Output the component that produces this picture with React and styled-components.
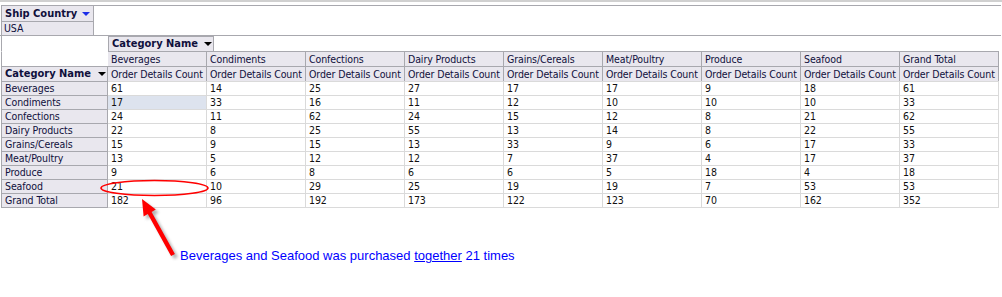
import React from 'react'
import { styled, createGlobalStyle } from 'styled-components'

const GlobalStyle = createGlobalStyle`
  body {
    margin: 0;
    background: #ffffff;
    font-family: "DejaVu Sans Condensed", "Liberation Sans", sans-serif;
    font-size: 10.5px;
    letter-spacing: -0.1px;
    color: #10103c;
  }
`

const columns = ['Beverages', 'Condiments', 'Confections', 'Dairy Products', 'Grains/Cereals', 'Meat/Poultry', 'Produce', 'Seafood', 'Grand Total']

const rows = [
  ['Beverages', 61, 14, 25, 27, 17, 17, 9, 18, 61],
  ['Condiments', 17, 33, 16, 11, 12, 10, 10, 10, 33],
  ['Confections', 24, 11, 62, 24, 15, 12, 8, 21, 62],
  ['Dairy Products', 22, 8, 25, 55, 13, 14, 8, 22, 55],
  ['Grains/Cereals', 15, 9, 15, 13, 33, 9, 6, 17, 33],
  ['Meat/Poultry', 13, 5, 12, 12, 7, 37, 4, 17, 37],
  ['Produce', 9, 6, 8, 6, 6, 5, 18, 4, 18],
  ['Seafood', 21, 10, 29, 25, 19, 19, 7, 53, 53],
  ['Grand Total', 182, 96, 192, 173, 122, 123, 70, 162, 352],
]

const App = () => {
  return (
    <Page>
      <GlobalStyle />
      <PageArea>
        <PageField>
          <FieldButton>Ship Country<Caret $blue /></FieldButton>
          <FieldValue>USA</FieldValue>
        </PageField>
        <PageFiller />
      </PageArea>
      <ColumnFieldRow>
        <ColumnButton>Category Name<Caret /></ColumnButton>
      </ColumnFieldRow>
      <Grid>
        <Corner />
        {columns.map(c => <HeadCell key={c}>{c}</HeadCell>)}
        <RowFieldCell>Category Name<Caret /></RowFieldCell>
        {columns.map(c => <HeadCell key={c}>Order Details Count</HeadCell>)}
        {rows.map((r, i) => (
          <React.Fragment key={r[0]}>
            <RowHead>{r[0]}</RowHead>
            {r.slice(1).map((v, j) => (
              <DataCell key={j} $hl={i === 1 && j === 0}>{v}</DataCell>
            ))}
          </React.Fragment>
        ))}
      </Grid>
      <Note>
        Beverages and Seafood was purchased <u>together</u> 21 times
      </Note>
      <Overlay width="1002" height="297" viewBox="0 0 1002 297">
        <defs>
          <filter id="sh" x="-50%" y="-50%" width="200%" height="200%">
            <feGaussianBlur stdDeviation="1.5" />
          </filter>
        </defs>
        <ellipse cx="154.5" cy="186" rx="53.5" ry="7.5" fill="none" stroke="#ff0000" strokeWidth="1.6" />
        <polygon
          points="142,197 155.8,207.6 151.6,209.9 174.9,251.9 171.1,254.1 147.8,212.1 143.6,214.4"
          fill="#808080" opacity="0.6" filter="url(#sh)" transform="translate(3,3)"
        />
        <polygon
          points="142,197 155.8,207.6 151.6,209.9 174.9,251.9 171.1,254.1 147.8,212.1 143.6,214.4"
          fill="#ff0000"
        />
      </Overlay>
    </Page>
  )
}

const Page = styled.div`
  position: relative;
  width: 1002px;
  height: 297px;
  box-sizing: border-box;
  border-top: 2px solid #d0d0d0;
  padding-top: 3px;
  overflow: hidden;
`

const PageArea = styled.div`
  display: flex;
  width: 1001px;
  border-bottom: 1px solid #a8a8ae;
`

const PageField = styled.div`
  width: 91px;
  margin-left: 1px;
  border: 1px solid #a8a8ae;
  border-bottom: none;
  display: flex;
  flex-direction: column;
`

const FieldButton = styled.div`
  height: 15px;
  line-height: 15px;
  padding-left: 3px;
  background: #e9e7ee;
  border-bottom: 1px solid #a8a8ae;
  font-size: 11px;
  letter-spacing: 0;
  font-weight: bold;
  display: flex;
  align-items: center;
  gap: 5px;
  color: #10103c;
`

const FieldValue = styled.div`
  height: 13px;
  line-height: 13px;
  padding-left: 2px;
  background: #e9e7ee;
`

const PageFiller = styled.div`
  flex: 1;
  border-top: 1px solid #a8a8ae;
`

const Caret = styled.span`
  display: inline-block;
  width: 0;
  height: 0;
  border-left: 4px solid transparent;
  border-right: 4px solid transparent;
  border-top: 4px solid ${p => (p.$blue ? '#1c2ee8' : '#000000')};
`

const ColumnFieldRow = styled.div`
  display: flex;
  margin-left: 1px;
  border-left: 1px solid #a8a8ae;
  padding-left: 106px;
  height: 15px;
`

const ColumnButton = styled.div`
  width: 101px;
  height: 14px;
  line-height: 14px;
  padding-left: 3px;
  background: #e9e7ee;
  border: 1px solid #a8a8ae;
  border-bottom: none;
  font-size: 11px;
  letter-spacing: 0;
  font-weight: bold;
  display: flex;
  align-items: center;
  gap: 6px;
`

const Grid = styled.div`
  display: grid;
  grid-template-columns: 107px repeat(9, 99px);
  margin-left: 1px;
  width: max-content;
`

const Cell = styled.div`
  box-sizing: border-box;
  padding-left: 3px;
  white-space: nowrap;
  overflow: hidden;
`

const Corner = styled(Cell)`
  height: 15px;
  border-left: 1px solid #a8a8ae;
  border-top: 1px solid #ffffff;
`

const HeadCell = styled(Cell)`
  height: 15px;
  line-height: 14px;
  background: #e9e7ee;
  border-top: 1px solid #a8a8ae;
  border-right: 1px solid #a8a8ae;
`

const RowFieldCell = styled(HeadCell)`
  border-left: 1px solid #a8a8ae;
  font-size: 11px;
  letter-spacing: 0;
  font-weight: bold;
  display: flex;
  align-items: center;
  gap: 7px;
`

const RowHead = styled(Cell)`
  height: 14px;
  line-height: 13px;
  background: #e9e7ee;
  border-top: 1px solid #a8a8ae;
  border-left: 1px solid #a8a8ae;
  border-right: 1px solid #a8a8ae;
  &:nth-last-child(10) {
    border-bottom: 1px solid #a8a8ae;
    height: 15px;
  }
`

const DataCell = styled(Cell)`
  height: 14px;
  line-height: 13px;
  color: #111111;
  background: ${p => (p.$hl ? '#dde3ee' : '#ffffff')};
  border-top: 1px solid #dadada;
  border-right: 1px solid #dadada;
  &:nth-last-child(-n + 9) {
    border-bottom: 1px solid #dadada;
    height: 15px;
  }
`

const Note = styled.div`
  margin-top: 40px;
  padding-left: 180px;
  font-family: "Liberation Sans", Arial, sans-serif;
  font-size: 13px;
  letter-spacing: 0;
  line-height: 15px;
  color: #0000ff;
  & u {
    text-underline-offset: 1px;
  }
`

const Overlay = styled.svg`
  position: absolute;
  left: 0;
  top: 0;
  pointer-events: none;
`

export default App
